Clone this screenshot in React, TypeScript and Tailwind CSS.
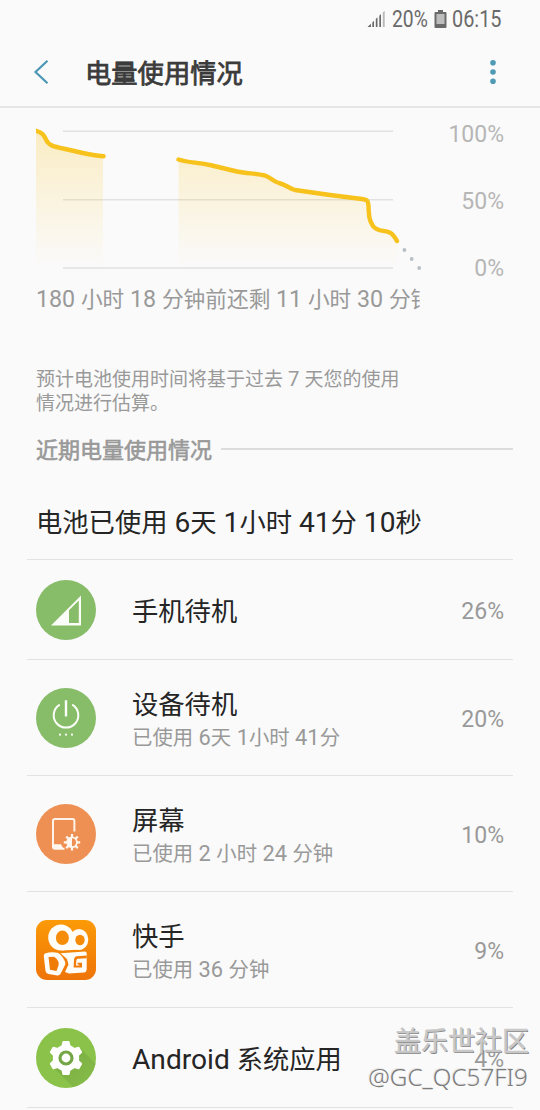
import type { ReactNode } from 'react'

type Usage = {
  name: string
  detail?: string
  percent: string
  icon: ReactNode
}

// Latin letters and digits are set slightly larger than the Chinese glyphs
function Mixed({ children }: { children: string }) {
  return (
    <>
      {children.split(/([A-Za-z0-9 ]+)/).map((part, i) =>
        i % 2 ? (
          <span key={i} className="text-[1.07em] leading-none">{part}</span>
        ) : (
          part
        ),
      )}
    </>
  )
}

function SignalIcon() {
  return (
    <svg width="64" height="64" viewBox="0 0 64 64" className="h-16 w-16">
      <circle cx="32" cy="32" r="30" fill="#87bd69" />
      <path d="M17 47.5 47 17.5V47.5Z" fill="#fbfdf8" />
      <path d="M35 45V32.2L44.8 22.6V45Z" fill="#87bd69" />
    </svg>
  )
}

function PowerIcon() {
  return (
    <svg width="64" height="64" viewBox="0 0 64 64" className="h-16 w-16">
      <circle cx="32" cy="32" r="30" fill="#87bd69" />
      <g fill="none" stroke="#fbfdf8" strokeWidth="2">
        <path d="M25.800 18.700a12.300 12.300 0 1 0 12.400 0" />
        <path d="M32 14.200V30.500" strokeWidth="2.4" />
      </g>
      <g fill="#f4f9f0">
        <rect x="25" y="47.6" width="2" height="2" />
        <rect x="31" y="47.6" width="2" height="2" />
        <rect x="37" y="47.6" width="2" height="2" />
      </g>
    </svg>
  )
}

function ScreenIcon() {
  return (
    <svg width="64" height="64" viewBox="0 0 64 64" className="h-16 w-16">
      <circle cx="32" cy="32" r="30" fill="#ee9053" />
      <path d="M40.400 29.500V19a2 2 0 0 0-2-2H21a2 2 0 0 0-2 2V44.800a2 2 0 0 0 2 2h9.500" fill="none" stroke="#fff3e8" strokeWidth="2" />
      <path d="M18.500 42.200H27l2.600 4.800h-9a2 2 0 0 1-2.100-2Z" fill="#fff7ef" />
      <g stroke="#fff7ef" strokeWidth="2.2">
        <path d="M38 32v4M38 44.600v4M29.800 40.300h4M42.200 40.300h4M32.200 34.500l2.500 2.500M41.300 43.600l2.500 2.500M43.800 34.500l-2.500 2.500M34.700 43.600l-2.500 2.500" />
        <circle cx="38" cy="40.3" r="4.9" fill="#ee9053" strokeWidth="1.8" />
      </g>
      <path d="M38 35.400a4.900 4.900 0 0 0 0 9.800Z" fill="#fff7ef" />
    </svg>
  )
}

function KuaishouIcon() {
  return (
    <svg width="64" height="64" viewBox="0 0 64 64" className="h-16 w-16">
      <defs>
        <linearGradient id="kuaishou" x1="0" y1="0" x2="0" y2="1">
          <stop offset="0" stopColor="#fb9a06" />
          <stop offset="1" stopColor="#ee7409" />
        </linearGradient>
      </defs>
      <rect x="2" y="2" width="60" height="60" rx="11" fill="url(#kuaishou)" />
      <g fill="#fffdf8">
        <ellipse cx="27" cy="19.5" rx="12.8" ry="13" />
        <ellipse cx="45" cy="21.5" rx="9.3" ry="10.5" />
        <path d="M24 24h24v7.500l-20 1Z" />
      </g>
      <ellipse cx="28.4" cy="19.8" rx="6.5" ry="7.2" fill="#f68d08" />
      <ellipse cx="46" cy="22" rx="4.7" ry="5.2" fill="#f68b08" />
      <path d="M11 35.500Q17 33.600 23.500 34.800Q28 37 31 43.500Q32 46 30.500 48L26.500 56Q25 58 22 57.200L14.500 56Q12 55.500 11.500 53L9.800 38Q9.800 36 11 35.500Z" fill="#fffdf8" />
      <path d="M14.500 39 20 38.800Q23 40 24.500 44Q25 46 24.300 48L22.500 53 16 51.800Z" fill="#ef7b09" />
      <path d="M26.500 35.200 51 33.500Q53 33.500 52.700 36V51.500Q52.600 54 50 54.500L35 55.500 31 54 34.500 46.500 33 41Z" fill="#fffdf8" />
      <path d="M52.700 37.500 43 38.200Q40.200 38.500 40 42L39.600 49.500H48V44.800H43.500V46.600H45.200V47.600H42L42.300 42.500Q42.500 40.800 44 40.700L52.700 40.300Z" fill="#f07d09" />
    </svg>
  )
}

function GearIcon() {
  return (
    <svg width="64" height="64" viewBox="0 0 64 64" className="h-16 w-16">
      <defs>
        <clipPath id="gear-clip">
          <circle cx="32" cy="32" r="30" />
        </clipPath>
        <linearGradient id="gear-shadow" x1="0" y1="0" x2="1" y2="1">
          <stop offset="0" stopColor="#78aa43" />
          <stop offset="1" stopColor="#8bc34a" />
        </linearGradient>
      </defs>
      <circle cx="32" cy="32" r="30" fill="#8bc34a" />
      <path d="M18 40 46 22 72 48V74H52Z" fill="url(#gear-shadow)" clipPath="url(#gear-clip)" />
      <g fill="#fff">
        <circle cx="32" cy="32" r="13.2" />
        <path id="tooth" d="M27.200 21 28.500 15.600Q28.700 15 29.400 15H34.600Q35.300 15 35.500 15.600L36.800 21Z" />
        <use href="#tooth" transform="rotate(60 32 32)" />
        <use href="#tooth" transform="rotate(120 32 32)" />
        <use href="#tooth" transform="rotate(180 32 32)" />
        <use href="#tooth" transform="rotate(240 32 32)" />
        <use href="#tooth" transform="rotate(300 32 32)" />
      </g>
      <circle cx="32" cy="32" r="6" fill="#fff" stroke="#75a645" strokeWidth="3.2" />
    </svg>
  )
}

const usages: Usage[] = [
  { name: '手机待机', percent: '26%', icon: <SignalIcon /> },
  { name: '设备待机', detail: '已使用 6天 1小时 41分', percent: '20%', icon: <PowerIcon /> },
  { name: '屏幕', detail: '已使用 2 小时 24 分钟', percent: '10%', icon: <ScreenIcon /> },
  { name: '快手', detail: '已使用 36 分钟', percent: '9%', icon: <KuaishouIcon /> },
  { name: 'Android 系统应用', percent: '4%', icon: <GearIcon /> },
]

function StatusBar() {
  return (
    <div className="flex h-[38px] items-center justify-end pr-[38px] text-[#6a6a6a]">
      <svg width="19" height="18" viewBox="0 0 19 18" className="mr-[6px]">
        <path d="M0.500 17 4 13.800V17Z M5.300 12.400 7 10.800V17H5.300Z M8.800 9 10.500 7.300V17H8.800Z M12.300 5.700 14 4V17H12.300Z" fill="#6a6a6a" />
        <path d="M15.800 2.500 17.700 0.800V17H15.800Z" fill="#b9b9b9" />
      </svg>
      <span className="w-[37px] origin-left scale-x-[0.82] whitespace-nowrap pt-px text-[23.500px]">20%</span>
      <svg width="13" height="18" viewBox="0 0 13 18" className="mx-[5px]">
        <path d="M4 0H9V2H11.500Q12.500 2 12.500 3V17Q12.500 18 11.500 18H1.500Q0.500 18 0.500 17V3Q0.500 2 1.500 2H4Z" fill="#6a6a6a" />
        <rect x="2.5" y="4" width="8" height="10" fill="#bdbdbd" />
      </svg>
      <span className="w-[50px] origin-left scale-x-[0.845] whitespace-nowrap pt-px text-[23.500px]">06:15</span>
    </div>
  )
}

function BatteryChart() {
  return (
    <svg width="386" height="170" viewBox="36 108 386 170" className="block">
      <defs>
        <linearGradient id="area" gradientUnits="userSpaceOnUse" x1="0" y1="130" x2="0" y2="268">
          <stop offset="0" stopColor="#fbc830" stopOpacity="0.27" />
          <stop offset="1" stopColor="#fbc830" stopOpacity="0" />
        </linearGradient>
      </defs>
      <path d="M63 131.300H393M63 199.700H393M63 268H393" stroke="#e1e1e1" strokeWidth="1.5" />
      <path d="M36 130C43 132 44 135 46 140C49 147 57 147 72 150.500C86 154 90 155 103 156.300V268H36Z" fill="url(#area)" />
      <path d="M178.500 159.500C190 163 197 162 212 165.500L237 171.500C248 173.500 257 173.500 265 175.500C272 178 272 181 279 183C286 184.500 288 188 295 190L330 195L362 199C368 200 368 201 368.500 206C369 216 369 220 373 226C378 233 386 229 392 234Q395 237 397 241V268H178.500Z" fill="url(#area)" />
      <g fill="none" stroke="#f7c21c" strokeWidth="4.4" strokeLinecap="round" strokeLinejoin="round">
        <path d="M35 130.500C42.500 132.500 44 135 46 139.500C49 147 57 147 72 150.500C86 154 90 155 103.500 156.300" />
        <path d="M178.500 159.500C190 163 197 162 212 165.500L237 171.500C248 173.500 257 173.500 265 175.500C272 178 272 181 279 183C286 184.500 288 188 295 190L330 195L362 199C368 200 368 201 368.500 206C369 216 369 220 373 226C378 233 386 229 392 234Q395 237 397 241" />
      </g>
      <g fill="#b7bfc4">
        <circle cx="404.4" cy="250" r="1.9" />
        <circle cx="411.7" cy="259" r="1.9" />
        <circle cx="419.2" cy="268" r="1.9" />
      </g>
    </svg>
  )
}

function UsageRow({ usage }: { usage: Usage }) {
  return (
    <li className={`flex items-center border-b border-[#e2e2e2] pl-[7px] pr-[9px] ${usage.detail ? 'h-[116px]' : 'h-[100px]'}`}>
      {usage.icon}
      <div className="ml-[34px] flex-1 pt-[5px]">
        <div className="text-[26.300px] leading-[36px] text-[#252525]">
          <Mixed>{usage.name}</Mixed>
        </div>
        {usage.detail && (
          <div className="text-[20.400px] leading-[30px] text-[#999]">
            <Mixed>{usage.detail}</Mixed>
          </div>
        )}
      </div>
      <span className="pt-[5px] text-[23px] text-[#999]">{usage.percent}</span>
    </li>
  )
}

function App() {
  return (
    <div className="relative h-[1110px] w-[540px] overflow-hidden bg-[#fafafa] font-[Roboto,'Noto_Sans_CJK_SC',sans-serif]">
      <StatusBar />
      <header className="flex h-[70px] items-center border-b-2 border-[#e6e6e6] pl-[33px] pr-[43px]">
        <svg width="16" height="26" viewBox="0 0 16 26" fill="none" stroke="#4b97b5" strokeWidth="2.2">
          <path d="M14.500 1.800 2.500 13 14.500 24.200" />
        </svg>
        <h1 className="ml-9 flex-1 pt-[6px] text-[26.300px] text-[#3b3b3b] [-webkit-text-stroke:0.8px_#3b3b3b]">电量使用情况</h1>
        <svg width="8" height="26" viewBox="0 0 8 26" fill="#4f9ab5">
          <circle cx="4" cy="3.7" r="2.8" />
          <circle cx="4" cy="13" r="2.8" />
          <circle cx="4" cy="22.2" r="2.8" />
        </svg>
      </header>

      <section className="flex h-[176px] justify-between pl-9 pr-9">
        <BatteryChart />
        <div className="flex flex-col items-end gap-[37.300px] pt-[11.500px] text-[23px] leading-[30px] text-[#b6b6b6]">
          <span>100%</span>
          <span>50%</span>
          <span>0%</span>
        </div>
      </section>
      <p className="ml-9 h-[84px] w-[384px] overflow-hidden whitespace-nowrap pt-px text-[21.700px] leading-[30px] text-[#999]">
        <Mixed>180 小时 18 分钟前还剩 11 小时 30 分钟</Mixed>
      </p>
      <p className="ml-9 text-[19px] leading-[23.500px] text-[#999]">
        <Mixed>预计电池使用时间将基于过去 7 天您的使用</Mixed>
        <br />
        情况进行估算。
      </p>
      <div className="ml-9 mr-[27px] mt-[18px] flex h-8 items-center gap-[9px]">
        <h2 className="pt-0.5 text-[22px] text-[#999] [-webkit-text-stroke:0.6px_#999]">近期电量使用情况</h2>
        <div className="h-0.5 flex-1 bg-[#dcdcdc]" />
      </div>

      <div className="mx-[27px]">
        <h3 className="flex h-[95px] items-center border-b border-[#e2e2e2] pl-[9px] pt-[23px] text-[26.300px] text-[#252525]">
          <span>
            <Mixed>电池已使用 6天 1小时 41分 10秒</Mixed>
          </span>
        </h3>
        <ul>
          {usages.map((usage) => (
            <UsageRow key={usage.name} usage={usage} />
          ))}
        </ul>
      </div>

      <div className="absolute right-[11px] top-[1024px] text-right">
        <div className="text-[27px] leading-[36px] text-[#c8c8c8] [text-shadow:1px_1px_0_#858585,-1px_-1px_0_#ffffffaa] [-webkit-text-stroke:0.5px_#c8c8c8]">盖乐世社区</div>
        <div className="pr-px font-['Noto_Sans',sans-serif] text-[24.300px] font-light leading-[33px] text-[#7c7c7c] [text-shadow:-1px_-1px_0_#e6e6e6]">@GC_QC57FI9</div>
      </div>
    </div>
  )
}

export default App
